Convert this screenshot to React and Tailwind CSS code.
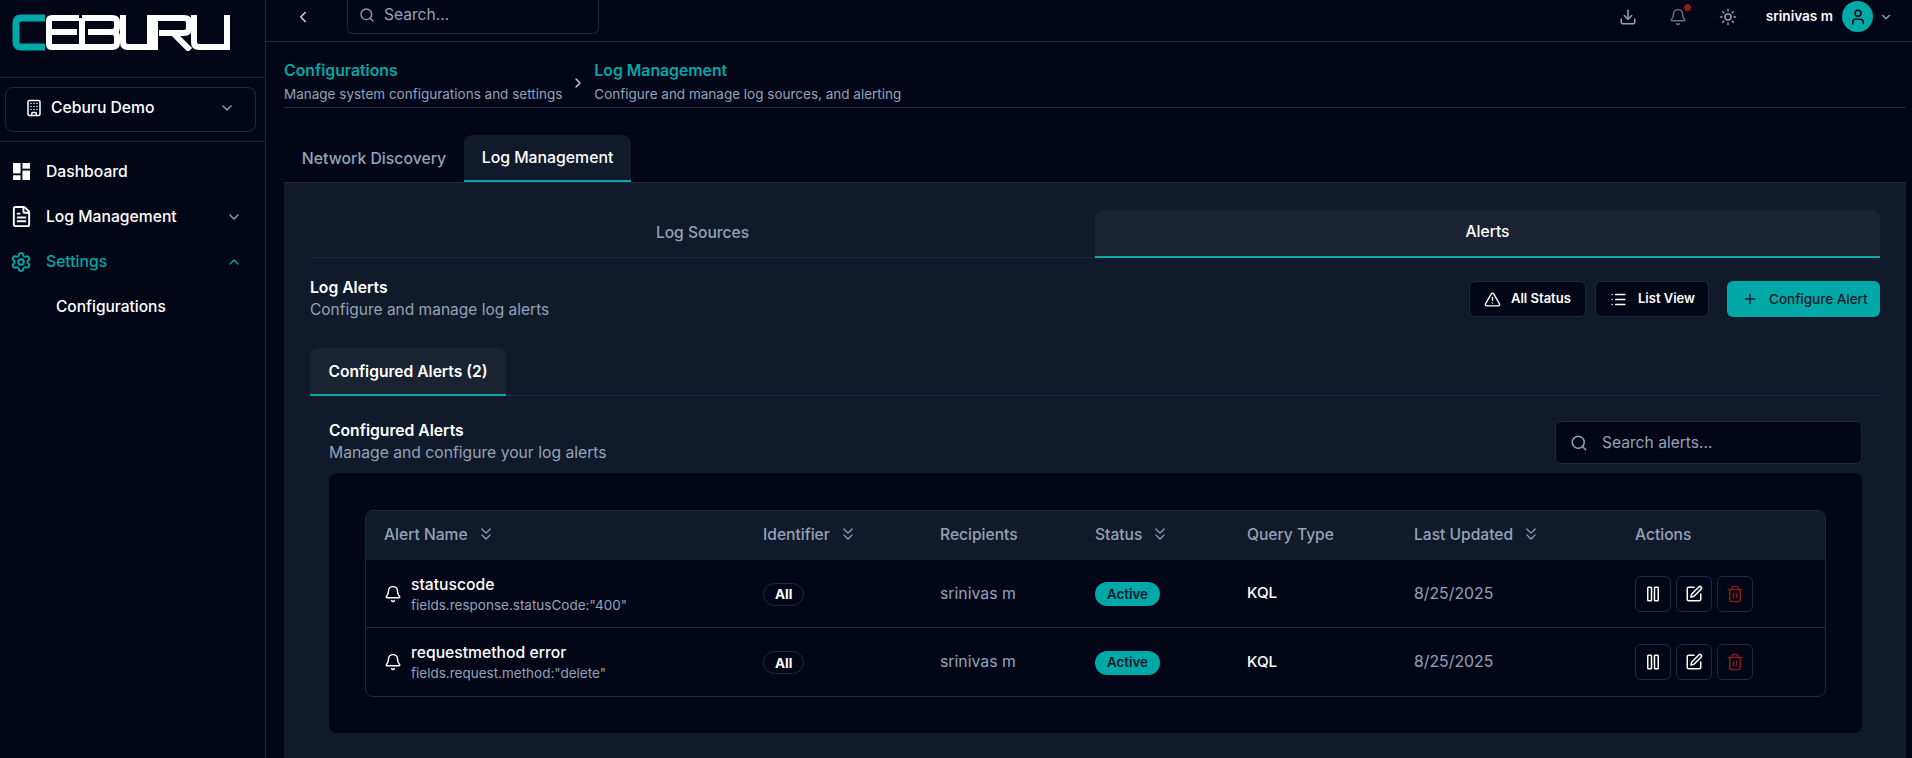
import {
  Bell,
  Building,
  ChevronDown,
  ChevronLeft,
  ChevronRight,
  ChevronUp,
  ChevronsDown,
  Download,
  FileText,
  List,
  Pause,
  Plus,
  Search,
  Settings,
  SquarePen,
  Sun,
  Trash2,
  TriangleAlert,
  User,
} from 'lucide-react'

const COLS = 'grid grid-cols-[379px_177px_155px_152px_167px_221px_1fr]'

const alerts = [
  { name: 'statuscode', query: 'fields.response.statusCode:"400"' },
  { name: 'requestmethod error', query: 'fields.request.method:"delete"' },
]

function Logo() {
  return (
    <svg width="220" height="37" viewBox="0 0 220 37" fill="none" role="img" aria-label="Ceburu logo">
      <path d="M33 4H9Q4 4 4 9V28Q4 33 9 33H33" stroke="#00a8a8" strokeWidth="7" />
      <g stroke="#ffffff" strokeWidth="6">
        <path d="M67 4H40Q37 4 37 7V30Q37 33 40 33H67M40 18H65" />
        <path d="M70 4H100Q105 4 105 8V13Q105 18 100 18H76M100 18Q105 18 105 23V29Q105 33 100 33H70V4" />
        <path d="M111 1V28Q111 33 116 33H138V1" />
        <path d="M143 36V4H172Q177 4 177 8V14Q177 19 172 19H147M161 19L178 36" />
        <path d="M182 1V28Q182 33 187 33H215V1" />
      </g>
    </svg>
  )
}

function DashboardIcon() {
  return (
    <svg width="17" height="17" viewBox="0 0 18 18" fill="#ffffff" aria-hidden="true">
      <rect x="0" y="0" width="8" height="11" />
      <rect x="10" y="0" width="8" height="6" />
      <rect x="10" y="8" width="8" height="10" />
      <rect x="0" y="13" width="8" height="5" />
    </svg>
  )
}

function NavItem({ icon, label, chevron, active }) {
  return (
    <div className={`flex h-[45px] items-center pl-[13px] pr-[23px] ${active ? 'text-[#00a8a8]' : 'text-white'}`}>
      <span className="flex w-[33px] shrink-0">{icon}</span>
      <span className="flex-1 text-[15.7px] font-medium">{label}</span>
      {chevron}
    </div>
  )
}

function Sidebar() {
  return (
    <aside className="flex w-[266px] shrink-0 flex-col border-r border-[#1e293b]">
      <div className="flex h-[78px] items-start border-b border-[#1e293b] pl-[12px] pt-[14px]">
        <Logo />
      </div>
      <div className="flex h-[64px] items-center border-b border-[#1e293b] px-[5px]">
        <div className="flex h-[45px] w-[251px] items-center rounded-lg border border-[#1e293b] pb-[4px] pl-[19px] pr-[20px] text-white">
          <Building size={18} strokeWidth={2} className="mr-[8px] shrink-0" />
          <span className="flex-1 text-[15.7px] font-medium">Ceburu Demo</span>
          <ChevronDown size={16} className="text-[#94a3b8]" />
        </div>
      </div>
      <nav className="flex flex-col pt-[7px]">
        <NavItem icon={<DashboardIcon />} label="Dashboard" />
        <NavItem
          icon={<FileText size={23} strokeWidth={2} className="-ml-[3px]" />}
          label="Log Management"
          chevron={<ChevronDown size={16} className="text-[#94a3b8]" />}
        />
        <NavItem
          icon={<Settings size={22} strokeWidth={2} className="-ml-[3px]" />}
          label="Settings"
          chevron={<ChevronUp size={16} />}
          active
        />
        <div className="flex h-[45px] items-center pl-[56px] text-[15.5px] font-medium text-white">Configurations</div>
      </nav>
    </aside>
  )
}

function Header() {
  return (
    <header className="flex h-[42px] shrink-0 items-center border-b border-[#1e293b] pb-[8px] pl-[28px] pr-[19px]">
      <ChevronLeft size={18} className="text-[#cbd5e1]" />
      <div className="ml-[35px] -mt-[8px] flex h-[42px] w-[252px] items-center rounded-b-md border border-t-0 border-[#1e293b] pl-[11px] pt-[6px] text-[#94a3b8]">
        <Search size={16} className="mr-[9px]" />
        <span className="text-[15.6px]">Search...</span>
      </div>
      <div className="ml-auto flex items-center">
        <Download size={18} className="text-[#94a3b8]" />
        <div className="relative ml-[32px]">
          <Bell size={18} className="text-[#64748b]" />
          <span className="absolute -right-[4px] -top-[4px] size-[7px] rounded-full bg-[#8b1d24]" />
        </div>
        <Sun size={18} className="ml-[32px] text-[#94a3b8]" />
        <span className="ml-[29px] text-[13.6px] font-semibold text-white">srinivas m</span>
        <div className="ml-[9px] flex size-[31px] items-center justify-center rounded-full bg-[#00a8a8] text-[#020617]">
          <User size={18} />
        </div>
        <ChevronDown size={14} className="ml-[6px] text-[#94a3b8]" />
      </div>
    </header>
  )
}

function Crumb({ title, sub }) {
  return (
    <div>
      <div className="text-[15.8px] font-semibold leading-[20px] text-[#00a8a8]">{title}</div>
      <div className="mt-[4px] text-[13.5px] leading-[18px] text-[#94a3b8]">{sub}</div>
    </div>
  )
}

function OutlineButton({ icon, label, className = '' }) {
  return (
    <button className={`flex h-[36px] items-center rounded-md border border-[#1e293b] bg-[#020617] text-[13px] font-semibold text-white ${className}`}>
      {icon}
      {label}
    </button>
  )
}

function SortHead({ label }) {
  return (
    <div className="flex items-center gap-[8px] pl-[18px]">
      <span>{label}</span>
      <ChevronsDown size={20} strokeWidth={1.5} />
    </div>
  )
}

function IconButton({ children, className = '' }) {
  return (
    <div className={`flex size-[36px] items-center justify-center rounded-md border border-[#1e293b] ${className}`}>
      {children}
    </div>
  )
}

function AlertRow({ alert, last }) {
  return (
    <div className={`${COLS} h-[68px] items-center ${last ? '' : 'border-b border-[#1e293b]'}`}>
      <div className="flex items-center pl-[18px]">
        <Bell size={18} className="mr-[9px] text-white" />
        <div>
          <div className="text-[15.7px] font-medium leading-[20px] text-white">{alert.name}</div>
          <div className="mt-[2px] text-[13.5px] leading-[16px] text-[#94a3b8]">{alert.query}</div>
        </div>
      </div>
      <div className="pl-[18px]">
        <span className="inline-flex h-[23px] items-center rounded-full border border-[#1e293b] px-[11px] text-[13.5px] font-bold text-white">All</span>
      </div>
      <div className="pl-[18px] text-[15.8px] text-[#94a3b8]">srinivas m</div>
      <div className="pl-[18px]">
        <span className="inline-flex h-[24px] items-center rounded-full bg-[#00a8a8] px-[12px] text-[13.3px] font-semibold text-[#0f172a]">Active</span>
      </div>
      <div className="pl-[18px] text-[15.2px] font-medium text-white">KQL</div>
      <div className="pl-[18px] text-[15.8px] text-[#94a3b8]">8/25/2025</div>
      <div className="flex gap-[5px] pl-[18px]">
        <IconButton><Pause size={18} className="text-white" /></IconButton>
        <IconButton><SquarePen size={18} className="text-white" /></IconButton>
        <IconButton><Trash2 size={18} className="text-[#7f1d1d]" /></IconButton>
      </div>
    </div>
  )
}

function AlertsTable() {
  return (
    <div className="overflow-hidden rounded-lg border border-[#1e293b]">
      <div className={`${COLS} h-[49px] items-center bg-[#111a2a] pb-[2px] text-[15.6px] font-medium text-[#94a3b8]`}>
        <SortHead label="Alert Name" />
        <SortHead label="Identifier" />
        <div className="pl-[18px]">Recipients</div>
        <SortHead label="Status" />
        <div className="pl-[18px]">Query Type</div>
        <SortHead label="Last Updated" />
        <div className="pl-[18px]">Actions</div>
      </div>
      {alerts.map((alert, i) => (
        <AlertRow key={alert.name} alert={alert} last={i === alerts.length - 1} />
      ))}
    </div>
  )
}

function AlertsPanel() {
  return (
    <section className="flex-1 border-t border-[#1e293b] bg-[#111a2a] pl-[26px] pr-[26px] pt-[27px]">
      <div className="grid h-[48px] grid-cols-2 rounded-t-lg border-b border-[#1e293b] text-[15.6px] font-medium">
        <div className="flex items-center justify-center pb-[2px] text-[#94a3b8]">Log Sources</div>
        <div className="-mb-px flex items-center justify-center rounded-t-lg border-b-2 border-[#00a8a8] bg-[#1a2332] pb-[2px] text-white">Alerts</div>
      </div>

      <div className="mt-[20px] flex h-[42px] items-start justify-between">
        <div>
          <div className="text-[15.7px] font-semibold leading-[20px] text-white">Log Alerts</div>
          <div className="mt-[2px] text-[15.5px] leading-[20px] text-[#94a3b8]">Configure and manage log alerts</div>
        </div>
        <div className="mt-[3px] flex items-center">
          <OutlineButton
            icon={<TriangleAlert size={17} className="mr-[10px]" />}
            label="All Status"
            className="w-[117px] pl-[14px]"
          />
          <OutlineButton
            icon={<List size={17} className="mr-[11px]" />}
            label="List View"
            className="ml-[9px] w-[114px] pl-[14px]"
          />
          <button className="ml-[18px] flex h-[36px] w-[153px] items-center rounded-md bg-[#00a8a8] pl-[15px] text-[13.5px] font-medium text-[#0f172a]">
            <Plus size={16} className="mr-[11px]" />
            Configure Alert
          </button>
        </div>
      </div>

      <div className="mt-[28px] border-b border-[#1e293b]">
        <div className="-mb-px flex h-[48px] w-[196px] items-center justify-center rounded-t-lg border-b-2 border-[#00a8a8] bg-[#1a2332] pt-[2px] text-[15.6px] font-semibold text-white">
          Configured Alerts (2)
        </div>
      </div>

      <div className="ml-[19px] mr-[18px] mt-[25px] flex h-[43px] items-start justify-between">
        <div>
          <div className="text-[15.7px] font-semibold leading-[20px] text-white">Configured Alerts</div>
          <div className="mt-[2px] text-[15.7px] leading-[20px] text-[#94a3b8]">Manage and configure your log alerts</div>
        </div>
        <div className="flex h-[43px] w-[307px] items-center rounded-md border border-[#1e293b] bg-[#020617] pl-[14px] text-[15.6px] text-[#94a3b8]">
          <Search size={18} className="mr-[14px]" />
          Search alerts...
        </div>
      </div>

      <div className="ml-[19px] mr-[18px] mt-[9px] rounded-lg bg-[#020617] px-[36px] pb-[36px] pt-[37px]">
        <AlertsTable />
      </div>
    </section>
  )
}

export default function App() {
  return (
    <div className="flex h-[758px] w-full overflow-hidden bg-[#020617] font-['Inter',sans-serif]">
      <Sidebar />
      <main className="flex min-w-0 flex-1 flex-col">
        <Header />
        <div className="flex flex-1 flex-col pl-[18px] pr-[6px]">
          <div className="flex h-[66px] shrink-0 items-start border-b border-[#1e293b] pt-[19px]">
            <Crumb title="Configurations" sub="Manage system configurations and settings" />
            <ChevronRight size={16} className="mx-[8px] mt-[14px] text-[#cbd5e1]" />
            <Crumb title="Log Management" sub="Configure and manage log sources, and alerting" />
          </div>
          <div className="mt-[27px] flex h-[47px] shrink-0 text-[15.8px] font-medium">
            <div className="flex w-[180px] items-center justify-center pt-[1px] text-[#94a3b8]">Network Discovery</div>
            <div className="flex w-[167px] items-center justify-center rounded-t-lg border-b-2 border-[#00a8a8] bg-[#111a2a] pt-[1px] text-white">Log Management</div>
          </div>
          <AlertsPanel />
        </div>
      </main>
    </div>
  )
}
